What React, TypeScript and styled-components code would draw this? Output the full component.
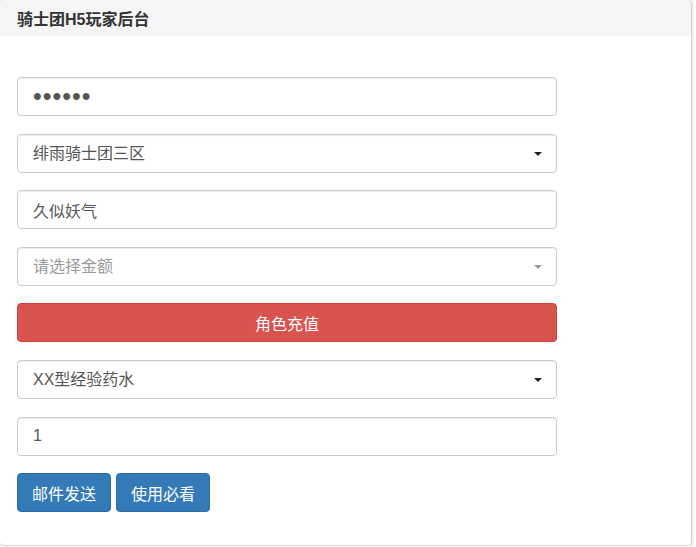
import React, { FC } from "react";
import styled, { createGlobalStyle } from "styled-components";

const GlobalStyle = createGlobalStyle`
    html, body {
        margin: 0;
        padding: 0;
        background: #fff;
    }
    body {
        font-family: "Liberation Sans", "Noto Sans CJK SC", sans-serif;
        color: #333;
    }
`

// Styled Components

const Panel = styled.div`
    width: 693px;
    margin: -1px 0 0 -1px;
    border: 1px solid #d4d4d4;
    border-radius: 4px;
    box-shadow: 1px 1px 2px rgba(0, 0, 0, 0.12);
    background: #fff;
    overflow: hidden;
    box-sizing: border-box;
`

const PanelHeading = styled.div`
    background-color: #f5f5f5;
    height: 36px;
    padding: 0 17px;
    display: flex;
    align-items: center;
    box-sizing: border-box;
`

const Title = styled.h3`
    margin: 0;
    font-size: 16px;
    font-weight: bold;
    color: #333;
`

const PanelBody = styled.div`
    padding: 41px 17px 33px;
    display: flex;
    flex-direction: column;
    gap: 17.6px;
`

const controlBase = `
    display: block;
    width: 540px;
    height: 39px;
    margin: 0;
    padding: 0 15px;
    font-size: 16px;
    font-family: "Liberation Sans", "Noto Sans CJK SC", sans-serif;
    color: #555;
    background: #fff;
    border: 1px solid #ccc;
    border-radius: 4px;
    box-shadow: inset 0 1px 1px rgba(0, 0, 0, 0.075);
    box-sizing: border-box;
    outline: none;
`

const Input = styled.input<{ $secret?: boolean }>`
    ${controlBase}
    font-size: ${p => (p.$secret ? "25px" : "16px")};
    letter-spacing: ${p => (p.$secret ? "1px" : "normal")};
`

const SelectWrap = styled.div<{ $muted?: boolean }>`
    position: relative;
    width: 540px;

    &::after {
        content: "";
        position: absolute;
        right: 15px;
        top: 18px;
        border-left: 4px solid transparent;
        border-right: 4px solid transparent;
        border-top: 4px solid ${p => (p.$muted ? "#999" : "#222")};
        pointer-events: none;
    }
`

const Select = styled.select<{ $muted?: boolean }>`
    ${controlBase}
    appearance: none;
    -webkit-appearance: none;
    color: ${p => (p.$muted ? "#999" : "#555")};
`

const Button = styled.button<{ $variant: "danger" | "primary"; $block?: boolean }>`
    height: 39px;
    padding: 0 14px;
    width: ${p => (p.$block ? "540px" : "auto")};
    font-size: 16px;
    font-family: "Liberation Sans", "Noto Sans CJK SC", sans-serif;
    color: #fff;
    border-radius: 4px;
    cursor: pointer;
    box-sizing: border-box;
    background-color: ${p => (p.$variant === "danger" ? "#d9534f" : "#337ab7")};
    border: 1px solid ${p => (p.$variant === "danger" ? "#d43f3a" : "#2e6da4")};
`

const ButtonRow = styled.div`
    display: flex;
    gap: 5px;
`

const App: FC = () => {

    return (
        <>
            <GlobalStyle />
            <Panel>
                <PanelHeading>
                    <Title>骑士团H5玩家后台</Title>
                </PanelHeading>
                <PanelBody>
                    <Input type="password" $secret defaultValue="123456" />
                    <SelectWrap>
                        <Select defaultValue="3">
                            <option value="3">绯雨骑士团三区</option>
                        </Select>
                    </SelectWrap>
                    <Input type="text" defaultValue="久似妖气" />
                    <SelectWrap $muted>
                        <Select $muted defaultValue="">
                            <option value="">请选择金额</option>
                        </Select>
                    </SelectWrap>
                    <Button $variant="danger" $block>角色充值</Button>
                    <SelectWrap>
                        <Select defaultValue="xx">
                            <option value="xx">XX型经验药水</option>
                        </Select>
                    </SelectWrap>
                    <Input type="text" defaultValue="1" />
                    <ButtonRow>
                        <Button $variant="primary">邮件发送</Button>
                        <Button $variant="primary">使用必看</Button>
                    </ButtonRow>
                </PanelBody>
            </Panel>
        </>
    )

}

export default App
